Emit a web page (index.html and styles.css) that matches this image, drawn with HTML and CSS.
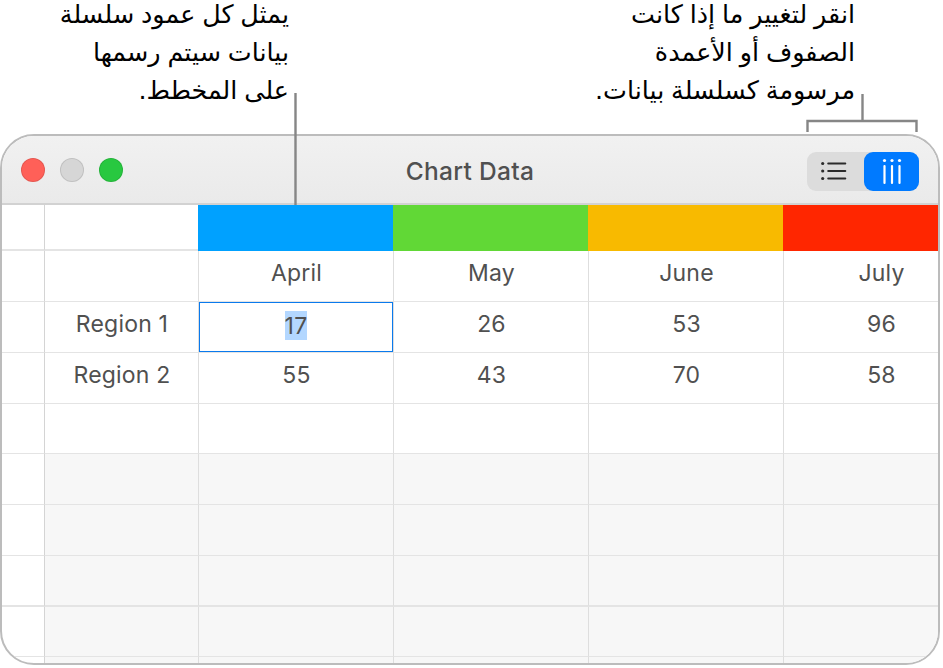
FILE: index.html
```
<!DOCTYPE html>
<html lang="ar">
<head>
  <meta charset="utf-8">
  <title>Chart Data</title>
  <link rel="stylesheet" href="styles.css">
</head>
<body>
<div class="figure">
  <div class="callouts" dir="rtl">
    <p class="callout callout-switch"><span>انقر لتغيير ما إذا كانت</span><span>الصفوف أو الأعمدة</span><span>مرسومة كسلسلة بيانات.</span></p>
    <p class="callout callout-series"><span>يمثل كل عمود سلسلة</span><span>بيانات سيتم رسمها</span><span>على المخطط.</span></p>
  </div>

  <div class="window">
    <div class="titlebar">
      <div class="lights">
        <i class="light close"></i>
        <i class="light minimize"></i>
        <i class="light zoom"></i>
      </div>
      <h1 class="title">Chart Data</h1>
      <div class="switch">
        <div class="segment">
          <svg width="26" height="20" viewBox="0 0 26 20">
            <g fill="#2b2b2b"><circle cx="1.7" cy="2.5" r="1.6"/><circle cx="1.7" cy="10" r="1.6"/><circle cx="1.7" cy="17.5" r="1.6"/></g>
            <path d="M7.2 2.5H24.3M7.2 10H24.3M7.2 17.5H24.3" stroke="#2b2b2b" stroke-width="2" stroke-linecap="round"/>
          </svg>
        </div>
        <div class="segment active">
          <svg width="20" height="27" viewBox="0 0 20 27">
            <g fill="#fff"><circle cx="2.5" cy="2.5" r="1.6"/><circle cx="10" cy="2.5" r="1.6"/><circle cx="17.5" cy="2.5" r="1.6"/></g>
            <path d="M2.5 8V25M10 8V25M17.5 8V25" stroke="#fff" stroke-width="2.2" stroke-linecap="round"/>
          </svg>
        </div>
      </div>
    </div>

    <div class="sheet">
      <div class="row series">
        <b></b><b></b><b class="blue"></b><b class="green"></b><b class="yellow"></b><b class="red"></b>
      </div>
      <div class="row"><b></b><b></b><b>April</b><b>May</b><b>June</b><b>July</b></div>
      <div class="row"><b></b><b>Region 1</b><b class="editing"><span class="selected">17</span></b><b>26</b><b>53</b><b>96</b></div>
      <div class="row"><b></b><b>Region 2</b><b>55</b><b>43</b><b>70</b><b>58</b></div>
      <div class="row short"><b></b><b></b><b></b><b></b><b></b><b></b></div>
      <div class="row empty"><b></b><b></b><b></b><b></b><b></b><b></b></div>
      <div class="row empty"><b></b><b></b><b></b><b></b><b></b><b></b></div>
      <div class="row empty thick"><b></b><b></b><b></b><b></b><b></b><b></b></div>
      <div class="row empty short"><b></b><b></b><b></b><b></b><b></b><b></b></div>
      <div class="row empty last"><b></b><b></b><b></b><b></b><b></b><b></b></div>
    </div>
  </div>

  <svg class="leaders" width="943" height="210" viewBox="0 0 943 210">
    <path d="M295.5 93V205M862.5 94V120M807.5 132V121H916.5V132" fill="none" stroke="#868686" stroke-width="2.4"/>
  </svg>
</div>
</body>
</html>
```
FILE: styles.css
```
* {
  box-sizing: border-box;
}

body {
  margin: 0;
  background: #fff;
  overflow: hidden;
}

.figure {
  position: relative;
  width: 943px;
  height: 668px;
}

.callouts {
  display: flex;
  height: 134px;
  padding-right: 88px;
}

.callout {
  display: flex;
  flex-direction: column;
  margin: 0;
  color: #000;
  font: 25.4px/38px "DejaVu Sans", sans-serif;
  word-spacing: -1.2px;
  white-space: nowrap;
}

.callout span {
  height: 38px;
}

.callout span:first-child {
  height: 33px;
  line-height: 29px;
}

.callout-switch {
  width: 566px;
}

.leaders {
  position: absolute;
  top: 0;
  left: 0;
}

.window {
  width: 940px;
  height: 531px;
  border: 2px solid #bcbcbc;
  border-radius: 34px;
  overflow: hidden;
  font-family: Inter, "Liberation Sans", sans-serif;
  color: #505050;
}

.titlebar {
  display: grid;
  grid-template-columns: 1fr auto 1fr;
  align-items: center;
  height: 69px;
  padding: 0 19px;
  background: linear-gradient(#f1f1f1, #eaeaea);
  border-bottom: 2px solid #d2d2d2;
}

.lights {
  display: flex;
  gap: 15px;
}

.light {
  width: 24px;
  height: 24px;
  border: 1px solid rgba(0, 0, 0, .1);
  border-radius: 50%;
}

.close {
  background: #ff6058;
}

.minimize {
  background: #d6d6d6;
}

.zoom {
  background: #28c840;
}

.title {
  margin: 3px 0 0;
  font-size: 24.5px;
  font-weight: 450;
  letter-spacing: .3px;
}

.switch {
  display: flex;
  justify-self: end;
  margin-top: 4px;
  width: 112px;
  height: 39px;
  border-radius: 9px;
  background: #dcdcdc;
}

.segment {
  display: flex;
  align-items: center;
  justify-content: center;
  width: 57px;
  padding: 0 3px 1px 0;
}

.segment.active {
  width: 55px;
  padding: 0;
  border-radius: 9px;
  background: #007aff;
}

.row {
  display: grid;
  grid-template-columns: 43px 154px repeat(4, 195px);
  height: 51px;
}

.row b {
  display: flex;
  align-items: center;
  justify-content: center;
  padding: 0 0 7px 1px;
  border-right: 1px solid #dedede;
  border-bottom: 1px solid #e4e4e4;
  font-size: 23px;
  font-weight: 400;
  letter-spacing: .2px;
}

.row b:first-child {
  border-right-color: #d4d4d4;
}

.series {
  height: 46px;
}

.series b {
  border-bottom-width: 2px;
}

.series b:nth-child(n+2) {
  border-right: 0;
}

.series .blue,
.series .green,
.series .yellow,
.series .red {
  margin-left: -1px;
  border: 0;
}

.blue {
  background: #00a1ff;
}

.green {
  background: #61d836;
}

.yellow {
  background: #f8ba00;
}

.red {
  background: #ff2600;
}

.short {
  height: 50px;
}

.empty b:nth-child(n+2) {
  background: #f7f7f7;
}

.row .editing {
  padding: 0 0 3px;
  box-shadow: inset 0 0 0 1px #0a7aed;
}

.selected {
  height: 29px;
  line-height: 30px;
  background: #b3d7ff;
}

.thick b {
  border-bottom-width: 2px;
}
```
